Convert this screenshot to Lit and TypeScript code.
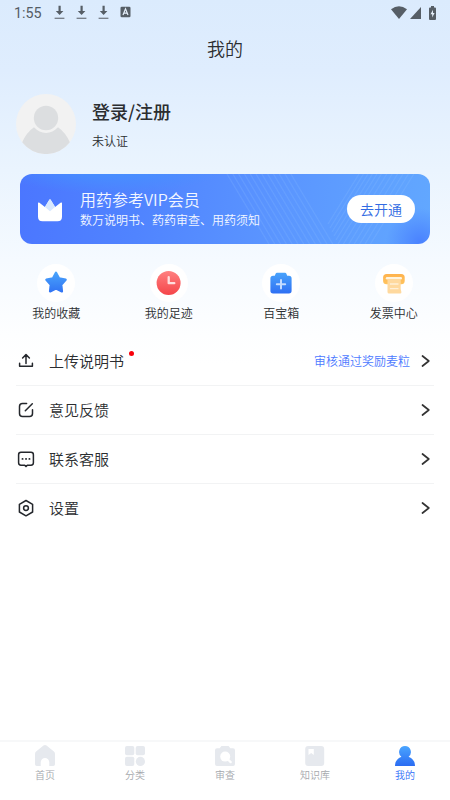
import { LitElement, html, svg, css } from "lit";
import { customElement } from "lit/decorators.js";

const download = html`<svg width="11" height="15" viewBox="0 0 11 15"><path d="M4.500 .8h2.200v5.200h2.700L5.600 9.900 1.800 6h2.700z" fill="#565e66"/><path d="M.6 13.300h9.800" stroke="#737b84" stroke-width="1.300"/></svg>`;

const features = [
  {
    label: "我的收藏",
    icon: svg`<path d="M19 8.800l3.100 5.700 6.500 1.300-4.400 4.900.7 6.600-5.900-2.800-5.900 2.800.7-6.600-4.400-4.900 6.500-1.300z" fill="url(#blue)" stroke="url(#blue)" stroke-width="2.400" stroke-linejoin="round"/>`,
  },
  {
    label: "我的足迹",
    icon: svg`<circle cx="18.600" cy="19" r="12" fill="url(#red)"/><path d="M18.700 13.200v6h5.600" fill="none" stroke="#ffdede" stroke-width="2.300" stroke-linecap="round" stroke-linejoin="round"/>`,
  },
  {
    label: "百宝箱",
    icon: svg`<path d="M15 8.800h8q1 0 1.400 1l.8 1.900h1.700q2.700 0 2.700 2.700v12.400q0 2.700-2.700 2.700H11.100q-2.700 0-2.700-2.700V14.400q0-2.700 2.700-2.700h1.700l.8-1.900q.4-1 1.400-1z" fill="url(#blue)"/><path d="M19 16v8.400M14.800 20.200h8.400" stroke="#c4dcff" stroke-width="2" stroke-linecap="round"/>`,
  },
  {
    label: "发票中心",
    icon: svg`<rect x="8.100" y="9.900" width="21.600" height="10.300" rx="3.500" fill="url(#orange)"/><rect x="10.800" y="13" width="16.200" height="2.600" rx="1.300" fill="#fff4df"/><path d="M12.500 15h13.200v10l.7 3q.2 1.500-1.300 1.500H14q-1.500 0-1.500-1.500z" fill="#ffd99e"/><path d="M14.900 20h8.600M14.900 24.600h8.600" stroke="#fff0d8" stroke-width="1.300"/>`,
  },
];

const rows = [
  {
    label: "上传说明书",
    dot: true,
    note: "审核通过奖励麦粒",
    icon: svg`<path d="M10 12.500V4M6.600 7L10 3.600 13.400 7M3.600 12.300v2.900h12.800v-2.900" stroke-linejoin="round"/>`,
  },
  {
    label: "意见反馈",
    icon: svg`<path d="M10.600 3.500H6.500q-3 0-3 3v7q0 3 3 3h7q3 0 3-3V9.800M9.300 10.700l7-7"/>`,
  },
  {
    label: "联系客服",
    icon: svg`<path d="M5 3.300h10q2.400 0 2.400 2.400v8.100q0 2.400-2.400 2.400h-3.600L10 17.400l-1.400-1.200H5q-2.400 0-2.400-2.400V5.700q0-2.400 2.400-2.400z"/><path d="M6.500 9.900h.1M10 9.900h.1M13.400 9.900h.1" stroke-width="1.900"/>`,
  },
  {
    label: "设置",
    icon: svg`<path d="M10 2.500l6.600 3.800v7.700L10 17.800 3.400 14V6.300z" stroke-linejoin="round"/><circle cx="10" cy="10.100" r="2.400"/>`,
  },
];

const tabs = [
  { label: "首页", icon: svg`<path d="M8.500 1.600q1.500-1.300 3 0l7.400 6q1.100.9 1.100 2.300v10.300q0 1.800-1.800 1.800h-3.900v-3.700a4.300 4.300 0 0 0-8.600 0V22H1.800Q0 22 0 20.200V9.900q0-1.400 1.100-2.300z"/>` },
  { label: "分类", icon: svg`<rect y="2" width="9.300" height="9.200" rx="1.900"/><rect x="10.700" y="2" width="9.300" height="9.200" rx="1.900"/><rect y="12.700" width="9.300" height="9.300" rx="1.900"/><circle cx="15.400" cy="17.400" r="4.600"/>` },
  { label: "审查", icon: svg`<path d="M6.400 2h7.200l1.700 2.300H18q2 0 2 2V20q0 2-2 2H2q-2 0-2-2V6.300q0-2 2-2h2.700z"/><circle cx="10.200" cy="12.600" r="5" fill="#fff"/><path d="M13.500 16l2.200 2.100" stroke="#fff" stroke-width="2.300" stroke-linecap="round"/>` },
  { label: "知识库", icon: svg`<rect x=".2" y="2" width="19" height="20" rx="3"/><path d="M3.500 5h5.300v6l-2.600-2-2.700 2z" fill="#fff"/>` },
  { label: "我的", active: true, icon: svg`<path d="M10 2a6 6 0 0 1 3.600 10.700Q20 15.300 20 22H0q0-6.700 6.400-9.300A6 6 0 0 1 10 2z" fill="url(#person)"/>` },
];

@customElement("app-root")
export class AppRoot extends LitElement {
  static styles = css`
    :host {
      display: flex;
      flex-direction: column;
      box-sizing: border-box;
      width: 450px;
      height: 800px;
      overflow: hidden;
      color: #2b2d30;
      font-family: "Noto Sans CJK SC", sans-serif;
      font-weight: 350;
      background: linear-gradient(#dbebfd 0, #dfedfe 70px, #eaf4fe 170px, #f5faff 260px, #fdfeff 335px, #fff 365px);
    }
    svg { display: block; flex: none; }
    .status { display: flex; height: 25px; flex: none; box-sizing: border-box; align-items: center; padding: 0 14px; color: #555d65; }
    .time { width: 40px; font: 14.300px/22px Roboto, sans-serif; }
    .downloads { display: flex; gap: 11px; flex: 1; }
    .signals { display: flex; gap: 3px; align-items: center; }
    .battery { margin-left: 5px; }
    h1 { margin: 0; height: 50px; font-size: 18px; line-height: 47px; font-weight: 350; text-align: center; }
    .profile { display: flex; gap: 16px; height: 60px; margin: 19px 16px 20px; }
    .name { font-size: 18px; line-height: 28px; font-weight: 500; padding-top: 3px; }
    .state { font-size: 12px; line-height: 18px; padding-top: 7px; }
    .banner {
      position: relative; display: flex; align-items: center; height: 70px; margin: 0 20px; padding: 0 15px 0 16px;
      box-sizing: border-box; border-radius: 12px; overflow: hidden; color: #fff; flex: none;
      background: radial-gradient(circle at 400px 68px, #4a82ff 0, #4a82ff00 34px), radial-gradient(ellipse at 90px -10px, #4495ff 0, #4495ff00 120px), linear-gradient(100deg, #4b76ff 0, #5084ff 30%, #5a94ff 60%, #62a8ff 100%);
    }
    .stripes { position: absolute; left: 0; top: 0; }
    .crown { position: relative; margin-right: 16px; }
    .offer { position: relative; flex: 1; color: #f3f7ff; }
    .plan { font-size: 16px; line-height: 21px; padding-top: 1px; }
    .perks { font-size: 12px; line-height: 20px; }
    .open { position: relative; width: 68px; height: 28px; border-radius: 14px; background: #fff; color: #316be3; font-size: 14px; line-height: 28px; text-align: center; }
    .features { display: grid; grid-template-columns: repeat(4, 1fr); margin-top: 20px; height: 73px; flex: none; }
    .feature { display: flex; flex-direction: column; align-items: center; font-size: 12px; line-height: 18px; gap: 2px; }
    .list { padding: 0 16px; flex: 1; }
    .row { display: flex; align-items: center; height: 49px; box-sizing: border-box; border-bottom: 1px solid #f2f3f4; font-size: 15px; line-height: 22px; }
    .row:last-child { border-color: transparent; }
    .label { margin-left: 13px; flex: 1; display: flex; padding-bottom: 1px; }
    .dot { width: 5px; height: 5px; border-radius: 50%; background: #f8000b; margin: 1px 0 0 5px; }
    .note { color: #4c79ff; font-size: 12px; margin-right: 10px; padding-bottom: 1px; }
    .chevron { margin-right: 3px; }
    .tabs { display: grid; grid-template-columns: repeat(5, 1fr); height: 60px; box-sizing: border-box; border-top: 2px solid #f7f8f9; padding-top: 2px; background: #fff; }
    .tab { display: flex; flex-direction: column; align-items: center; font-size: 10px; line-height: 15px; color: #a5a8ad; fill: #e6e9ee; }
    .active { color: #2e6df8; }
  `;

  render() {
    return html`
      <div class="status">
        <span class="time">1:55</span>
        <div class="downloads">
          ${download}${download}${download}
          <svg width="11" height="15" viewBox="0 0 11 15"><rect x=".5" y="1.800" width="10" height="10.500" rx="1.300" fill="#565e66"/><path d="M3 10l2.500-6.200L8 10M4 8.100h3" fill="none" stroke="#e6f0fb" stroke-width="1.200"/></svg>
        </div>
        <div class="signals">
          <svg width="16" height="13" viewBox="0 0 16 13"><path d="M0 3.200Q8-2.600 16 3.200L8 13z" fill="#565e66"/></svg>
          <svg width="11" height="12" viewBox="0 0 11 12"><path d="M11 0v12H0z" fill="#565e66"/></svg>
          <svg class="battery" width="7" height="14" viewBox="0 0 7 14"><path d="M2 0h3v1.400h1q1 0 1 1V13q0 1-1 1H1q-1 0-1-1V2.400q0-1 1-1h1z" fill="#565e66"/><path d="M4 3.700L1.500 8.200h1.700v3.300l2.400-4.600H4z" fill="#e6f0fb"/></svg>
        </div>
      </div>
      <h1>我的</h1>
      <div class="profile">
        <svg width="60" height="60" viewBox="0 0 60 60">
          <circle cx="30" cy="30" r="30" fill="#f2f2f2"/>
          <circle cx="30" cy="24" r="12.200" fill="#dcdee0"/>
          <path d="M6.200 48.300Q10.500 38.500 18 33.300q5.300 5.600 12 5.600t12-5.600q7.500 5.200 11.800 15A30 30 0 0 1 6.200 48.300z" fill="#dcdee0"/>
        </svg>
        <div><div class="name">登录/注册</div><div class="state">未认证</div></div>
      </div>
      <div class="banner">
        <svg class="stripes" width="410" height="70" viewBox="0 0 410 70">
          <g stroke="#8fc4ff" stroke-opacity=".2" stroke-width="1.300">
            ${Array.from({ length: 12 }, (_, i) => svg`<path d="M${207 + i * 5.8} 0l42 70"/>`)}
            ${Array.from({ length: 12 }, (_, i) => {
              const bottom = Math.min(50 + i * 4, 70);
              const x = i < 6 ? 308 + i * 2 : 318 + (i - 5) * 5.4;
              return svg`<path d="M${x} ${bottom}l${bottom * 0.62} ${-bottom}"/>`;
            })}
          </g>
        </svg>
        <svg class="crown" width="28" height="28" viewBox="0 0 28 28">
          <path d="M2 8.200Q2 7 3.100 7.600L8.900 12l4.300-7.100q.8-1.100 1.600 0l4.300 7.100 5.800-4.400Q26 7 26 8.200v13.500q0 4.500-4.500 4.500h-15Q2 26.200 2 21.700z" fill="#fff"/>
          <path d="M8.900 12l4.300-7.100q.8-1.100 1.600 0l4.300 7.100-5.100 4.300z" fill="#d8e8ff"/>
        </svg>
        <div class="offer"><div class="plan">用药参考VIP会员</div><div class="perks">数万说明书、药药审查、用药须知</div></div>
        <div class="open">去开通</div>
      </div>
      <div class="features">
        ${features.map((f) => html`<div class="feature">
          <svg width="38" height="38" viewBox="0 0 38 38">
            <defs>
              <linearGradient id="blue" gradientUnits="userSpaceOnUse" x1="0" y1="7" x2="0" y2="30"><stop stop-color="#4ba7fc"/><stop offset="1" stop-color="#2f6ff3"/></linearGradient>
              <linearGradient id="red" x2="0" y2="1"><stop stop-color="#ff8080"/><stop offset="1" stop-color="#f54549"/></linearGradient>
              <linearGradient id="orange" x2="0" y2="1"><stop stop-color="#ffb24c"/><stop offset="1" stop-color="#ffc45f"/></linearGradient>
            </defs>
            <circle cx="19" cy="19" r="19" fill="#fff"/>${f.icon}
          </svg>
          <span>${f.label}</span>
        </div>`)}
      </div>
      <div class="list">
        ${rows.map((r) => html`<div class="row">
          <svg width="20" height="20" viewBox="0 0 20 20" fill="none" stroke="#24272c" stroke-width="1.500" stroke-linecap="round">${r.icon}</svg>
          <span class="label">${r.label}${r.dot ? html`<i class="dot"></i>` : ""}</span>
          ${r.note ? html`<span class="note">${r.note}</span>` : ""}
          <svg class="chevron" width="11" height="14" viewBox="0 0 11 14"><path d="M2.500 2l6.300 5-6.300 5" fill="none" stroke="#333" stroke-width="1.700" stroke-linecap="round" stroke-linejoin="round"/></svg>
        </div>`)}
      </div>
      <div class="tabs">
        ${tabs.map((t) => html`<div class="tab ${t.active ? "active" : ""}">
          <svg width="20" height="23" viewBox="0 0 20 23"><defs><linearGradient id="person" x2="0" y2="1"><stop stop-color="#4aa5ff"/><stop offset="1" stop-color="#2b6cf2"/></linearGradient></defs>${t.icon}</svg>
          <span>${t.label}</span>
        </div>`)}
      </div>`;
  }
}
